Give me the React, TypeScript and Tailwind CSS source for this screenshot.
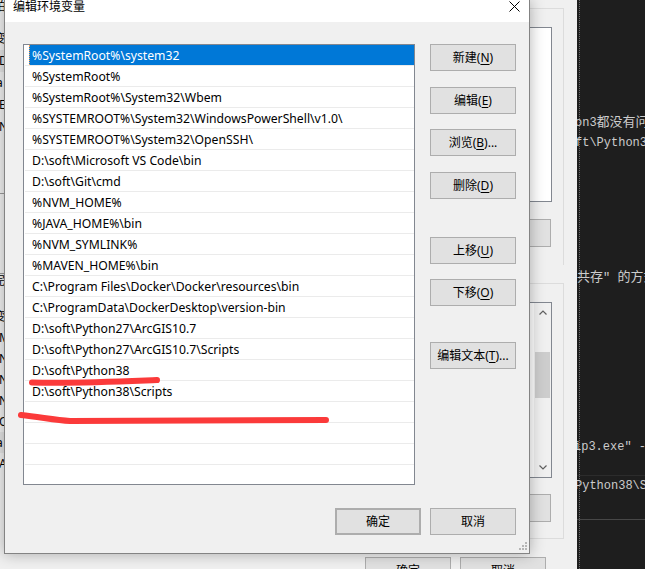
import React from "react";

const paths = [
  "%SystemRoot%\\system32",
  "%SystemRoot%",
  "%SystemRoot%\\System32\\Wbem",
  "%SYSTEMROOT%\\System32\\WindowsPowerShell\\v1.0\\",
  "%SYSTEMROOT%\\System32\\OpenSSH\\",
  "D:\\soft\\Microsoft VS Code\\bin",
  "D:\\soft\\Git\\cmd",
  "%NVM_HOME%",
  "%JAVA_HOME%\\bin",
  "%NVM_SYMLINK%",
  "%MAVEN_HOME%\\bin",
  "C:\\Program Files\\Docker\\Docker\\resources\\bin",
  "C:\\ProgramData\\DockerDesktop\\version-bin",
  "D:\\soft\\Python27\\ArcGIS10.7",
  "D:\\soft\\Python27\\ArcGIS10.7\\Scripts",
  "D:\\soft\\Python38",
  "D:\\soft\\Python38\\Scripts",
  "",
  "",
  "",
  "",
];

const Btn: React.FC<{ className?: string; children?: React.ReactNode }> = ({ className = "", children }) => (
  <div
    className={`flex h-[27px] w-[86px] shrink-0 items-center justify-center border border-[#adadad] bg-[#e1e1e1] text-[12px] leading-none text-black ${className}`}
  >
    {children}
  </div>
);

const Key: React.FC<{ k: string }> = ({ k }) => <span className="underline underline-offset-[2px]">{k}</span>;

const Chevron: React.FC<{ up?: boolean }> = ({ up }) => (
  <svg width="8" height="5" viewBox="0 0 8 5" className="shrink-0">
    <path d={up ? "M0.5 4.5 L4 1 L7.5 4.5" : "M0.5 0.5 L4 4 L7.5 0.5"} fill="none" stroke="#606060" strokeWidth="1.2" />
  </svg>
);

// the environment variable window sitting behind the dialog
const BackWindow: React.FC = () => (
  <div className="flex h-full w-[577px] shrink-0 flex-col overflow-hidden bg-[#f0f0f0]">
    <div className="flex h-[557px] shrink-0">
      {/* sliver of the left column that peeks out */}
      <div className="flex w-[4px] flex-col overflow-hidden whitespace-nowrap text-[12px] leading-none">
        <div className="-ml-[6px] h-[13px] shrink-0 leading-[13px]">拍</div>
        <div className="h-[15px] shrink-0" />
        <div className="-ml-[6px] h-[22px] shrink-0 leading-[22px]">变</div>
        <div className="-ml-[1px] h-[22px] shrink-0 bg-[#e3e3e3] leading-[22px]">D</div>
        <div className="-ml-[4px] h-[22px] shrink-0 leading-[22px]">a</div>
        <div className="-ml-[1px] h-[22px] shrink-0 leading-[22px]">E</div>
        <div className="-ml-[1px] h-[22px] shrink-0 leading-[22px]">N</div>
        <div className="h-[55px] shrink-0" />
        <div className="h-[1px] shrink-0 bg-[#9a9a9a]" />
        <div className="h-[79px] shrink-0" />
        <div className="h-[1px] shrink-0 bg-[#9a9a9a]" />
        <div className="-ml-[7px] h-[14px] shrink-0 leading-[14px]">完</div>
        <div className="h-[18px] shrink-0" />
        <div className="-ml-[6px] h-[21px] shrink-0 leading-[21px]">变</div>
        <div className="-ml-[1px] h-[21px] shrink-0 leading-[21px]">M</div>
        <div className="-ml-[1px] h-[21px] shrink-0 leading-[21px]">N</div>
        <div className="-ml-[1px] h-[21px] shrink-0 leading-[21px]">N</div>
        <div className="-ml-[1px] h-[21px] shrink-0 leading-[21px]">N</div>
        <div className="-ml-[1px] h-[21px] shrink-0 leading-[21px]">O</div>
        <div className="-ml-[4px] h-[21px] shrink-0 bg-[#e3e3e3] leading-[21px]">a</div>
        <div className="-ml-[1px] h-[21px] shrink-0 leading-[21px]">A</div>
      </div>
      <div className="flex-1" />
      {/* right edge of the two group boxes */}
      <div className="flex w-[50px] flex-col">
        <div className="mt-[8px] h-[257px] w-[37px] shrink-0 border-r border-t border-[#dcdcdc] pt-[18px]">
          <div className="h-[175px] w-[25px] border border-[#828790] bg-white" />
          <div className="mt-[17px] h-[28px] w-[24px] border border-[#adadad] bg-[#e1e1e1]" />
        </div>
        <div className="mt-[18px] h-[256px] w-[37px] shrink-0 border-b border-r border-t border-[#dcdcdc] pt-[18px]">
          <div className="flex h-[176px] w-[25px] justify-end border border-[#828790] bg-white">
            <div className="flex w-[17px] flex-col items-center bg-[#f0f0f0]">
              <div className="mt-[7px]">
                <Chevron up />
              </div>
              <div className="mt-[37px] h-[46px] w-[15px] bg-[#cdcdcd]" />
              <div className="flex-1" />
              <div className="mb-[7px]">
                <Chevron />
              </div>
            </div>
          </div>
          <div className="mt-[16px] h-[28px] w-[24px] border border-[#adadad] bg-[#e1e1e1]" />
        </div>
      </div>
    </div>
    <div className="flex shrink-0 gap-[9px] pl-[365px]">
      <Btn>确定</Btn>
      <Btn>取消</Btn>
    </div>
  </div>
);

// the dark editor/terminal strip on the right
const Terminal: React.FC = () => (
  <div className="flex h-full w-[68px] shrink-0 overflow-hidden bg-[#1e1e1e] font-['Liberation_Mono','Noto_Sans_CJK_SC',monospace] text-[12px] text-[#cccccc]">
    <div className="ml-[2px] flex h-full flex-1 flex-col border-l border-dotted border-[#6a6a6a]">
      <div className="-ml-[5px] mt-[112px] h-[21px] shrink-0 whitespace-nowrap leading-[21px]">
        on3<span className="text-[13px]">都没有问题</span>
      </div>
      <div className="-ml-[5px] h-[21px] shrink-0 whitespace-nowrap leading-[21px]">ft\Python38</div>
      <div className="-ml-[3px] mt-[113px] h-[21px] shrink-0 whitespace-nowrap leading-[21px]">
        <span className="text-[13px]">共存</span>" <span className="text-[13px]">的方式</span>
      </div>
      <div className="-ml-[6px] mt-[149px] h-[21px] shrink-0 whitespace-nowrap leading-[21px]">ip3.exe" -m</div>
      <div className="-ml-[3px] mt-[17px] h-[1px] shrink-0 bg-[#2c2c2c]" />
      <div className="-ml-[5px] h-[20px] shrink-0 whitespace-nowrap leading-[20px]">Python38\Scripts</div>
      <div className="-ml-[3px] mt-[23px] h-[1px] shrink-0 bg-[#474747]" />
    </div>
  </div>
);

const EditDialog: React.FC = () => (
  <div className="absolute left-[4px] top-0 flex h-[554px] w-[526px] flex-col border-x border-b border-[#838383] bg-[#f0f0f0] shadow-[0_0_14px_rgba(0,0,0,0.3)]">
    <div className="flex h-[22px] shrink-0 items-start justify-between bg-white pl-[8px] pr-[9px]">
      <span className="mt-[1px] text-[12px] leading-[12px]">编辑环境变量</span>
      <svg width="11" height="11" viewBox="0 0 11 11" className="mt-[0.5px]">
        <path d="M0.5 0.5 L10.5 10.5 M10.5 0.5 L0.5 10.5" stroke="#000" strokeWidth="1" />
      </svg>
    </div>

    <div className="flex pl-[18px] pt-[22px]">
      <div className="h-[441px] w-[392px] shrink-0 overflow-hidden border border-[#828790] bg-white">
        {paths.map((p, i) => (
          <div key={i} className="ml-[1px] h-[21px] border-b border-[#ebebeb]">
            <div
              className={
                i === 0
                  ? "ml-[4px] h-[20px] whitespace-nowrap border-l border-dotted border-[#f2a05a] bg-[#0078d7] pl-[2px] pt-[1px] text-[12.2px] leading-[20px] text-white"
                  : "ml-[4px] h-[20px] whitespace-nowrap pl-[3px] pt-[1px] text-[12.2px] leading-[20px] text-black"
              }
            >
              {p}
            </div>
          </div>
        ))}
      </div>

      <div className="ml-[15px] flex flex-col">
        <Btn>
          新建(<Key k="N" />)
        </Btn>
        <Btn className="mt-[16px]">
          编辑(<Key k="E" />)
        </Btn>
        <Btn className="mt-[15px]">
          浏览(<Key k="B" />)...
        </Btn>
        <Btn className="mt-[16px]">
          删除(<Key k="D" />)
        </Btn>
        <Btn className="mt-[38px]">
          上移(<Key k="U" />)
        </Btn>
        <Btn className="mt-[15px]">
          下移(<Key k="O" />)
        </Btn>
        <Btn className="mt-[36px]">
          编辑文本(<Key k="T" />)...
        </Btn>
      </div>
    </div>

    <div className="mt-[23px] flex justify-end gap-[9px] pr-[13px]">
      <Btn className="border-2 border-[#0078d7]">确定</Btn>
      <Btn>取消</Btn>
    </div>

    {/* size grip */}
    <svg width="9" height="9" viewBox="0 0 9 9" className="absolute bottom-[2px] right-[2px]">
      <rect x="7" y="0" width="2" height="2" fill="#b5b5b5" />
      <rect x="4" y="3" width="2" height="2" fill="#b5b5b5" />
      <rect x="7" y="3" width="2" height="2" fill="#b5b5b5" />
      <rect x="1" y="6" width="2" height="2" fill="#b5b5b5" />
      <rect x="4" y="6" width="2" height="2" fill="#b5b5b5" />
      <rect x="7" y="6" width="2" height="2" fill="#b5b5b5" />
    </svg>
  </div>
);

// red pen marks drawn over the screenshot
const Scribbles: React.FC = () => (
  <svg width="645" height="569" viewBox="0 0 645 569" className="pointer-events-none absolute left-0 top-0">
    <path d="M32 382.5 C 80 383.5, 120 381.5, 157 380" fill="none" stroke="#fb3a3a" strokeWidth="6" strokeLinecap="round" />
    <path d="M21 415 C 40 417, 55 420, 70 421 L 326 420" fill="none" stroke="#fb3a3a" strokeWidth="6" strokeLinecap="round" strokeLinejoin="round" />
  </svg>
);

export default function App() {
  return (
    <div className="relative flex h-[569px] w-[645px] overflow-hidden bg-[#f0f0f0] font-['Noto_Sans','Noto_Sans_CJK_SC',sans-serif] text-black">
      <BackWindow />
      <Terminal />
      <EditDialog />
      <Scribbles />
    </div>
  );
}
